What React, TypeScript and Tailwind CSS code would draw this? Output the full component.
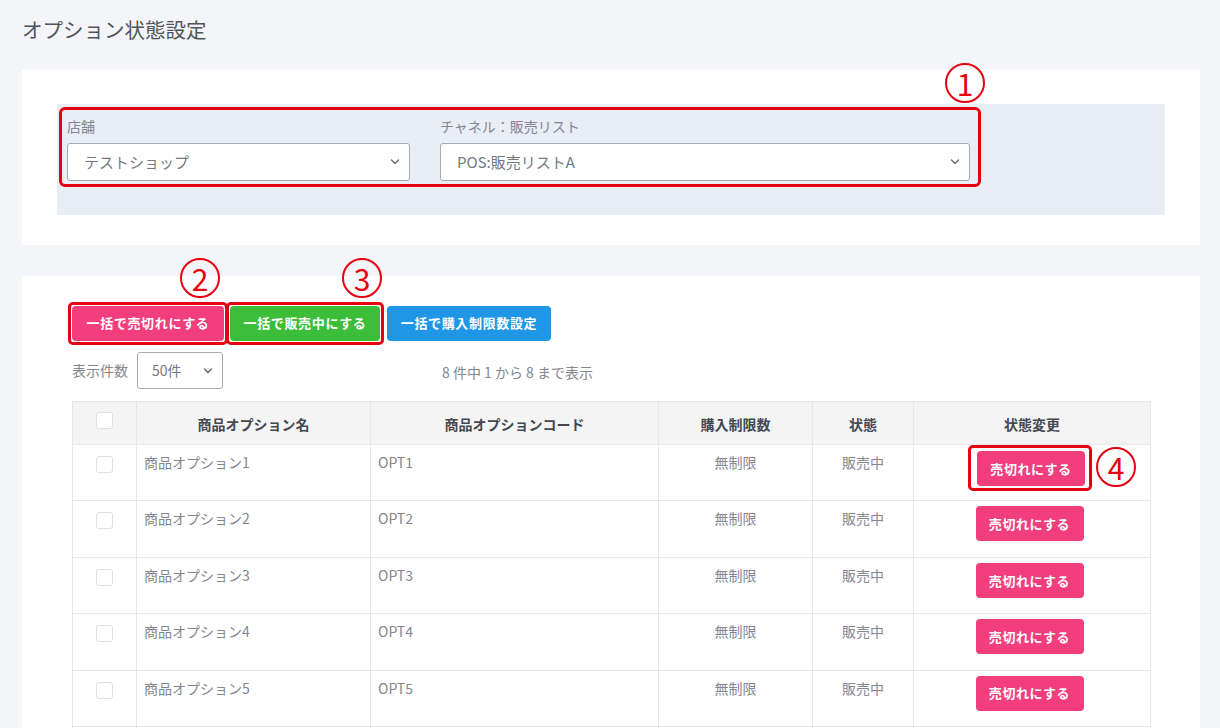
import type React from "react";

const rows = [1, 2, 3, 4, 5, 6, 7, 8];

const Circled: React.FC<{ n: string; className: string }> = ({ n, className }) => (
	<div
		className={`absolute w-[40px] h-[40px] rounded-full border-2 border-[#e60012] flex items-center justify-center text-[30px] leading-none text-[#e60012] bg-transparent ${className}`}
	>
		{n}
	</div>
);

const Chevron = () => (
	<svg
		className="absolute right-[10px] top-1/2 -translate-y-1/2 pointer-events-none"
		width="10"
		height="7"
		viewBox="0 0 10 7"
		fill="none"
	>
		<path d="M1.5 1.5 5 5 8.5 1.5" stroke="#6b6e75" strokeWidth="1.5" strokeLinecap="round" strokeLinejoin="round" />
	</svg>
);

const SelectBox: React.FC<{ value: string; className: string; textClass?: string }> = ({
	value,
	className,
	textClass = "pl-[16px] text-[15px]",
}) => (
	<div className={`relative ${className}`}>
		<select
			defaultValue={value}
			className={`w-full h-full appearance-none bg-white border border-[#a9abb0] rounded-[3px] text-[#757880] outline-none ${textClass}`}
		>
			<option>{value}</option>
		</select>
		<Chevron />
	</div>
);

const Checkbox = () => (
	<div className="w-[17px] h-[17px] border border-[#dcdfe4] rounded-[3px] bg-white" />
);

export default function App() {
	return (
		<div
			className="min-h-screen bg-[#f3f5f9] pl-[22px] pr-[20px] text-[#555]"
			style={{ fontFamily: '"Noto Sans CJK JP", "Noto Sans", sans-serif' }}
		>
			<h1 className="h-[70px] pt-[15px] text-[20.5px] leading-[28px] text-[#505458]">
				オプション状態設定
			</h1>

			{/* filter card */}
			<div className="relative bg-white pt-[34px] pb-[30px] px-[35px]">
				<Circled n="1" className="left-[923px] top-[-7px]" />
				<div className="bg-[#e9edf5] h-[111px] pt-[3px] pl-[2px]">
					<div className="w-[922px] h-[80px] border-[3px] border-[#e60012] rounded-[6px] pl-[5px] pr-[8px] flex gap-[30px]">
						<div className="w-[343px]">
							<div className="h-[33px] pt-[6px] text-[14px] leading-[20px] text-[#84878f]">店舗</div>
							<SelectBox value="テストショップ" className="h-[38px]" />
						</div>
						<div className="w-[530px]">
							<div className="h-[33px] pt-[6px] text-[14px] leading-[20px] text-[#84878f]">
								チャネル：販売リスト
							</div>
							<SelectBox value="POS:販売リストA" className="h-[38px]" />
						</div>
					</div>
				</div>
			</div>

			{/* list card */}
			<div className="relative bg-white mt-[31px] pt-[25px] pl-[50px] pr-[50px] pb-[10px]">
				<Circled n="2" className="left-[158px] top-[-18px]" />
				<Circled n="3" className="left-[320px] top-[-18px]" />

				<div className="flex items-center h-[44px]">
					<div className="-ml-[4px] border-[3px] border-[#e60012] rounded-[5px] p-[1px]">
						<button className="h-[35px] w-[152px] rounded-[4px] bg-[#f23e7d] text-white text-[13px] font-bold tracking-[0.05em]">
							一括で売切れにする
						</button>
					</div>
					<div className="-ml-[2px] border-[3px] border-[#e60012] rounded-[5px] p-[1px]">
						<button className="h-[35px] w-[150px] rounded-[4px] bg-[#3dbe3b] text-white text-[13px] font-bold tracking-[0.05em]">
							一括で販売中にする
						</button>
					</div>
					<button className="ml-[3px] h-[35px] w-[164px] rounded-[4px] bg-[#1f97e6] text-white text-[13px] font-bold tracking-[0.05em]">
						一括で購入制限数設定
					</button>
				</div>

				<div className="flex items-center mt-[7px] h-[37px]">
					<span className="text-[14px] text-[#84878f] w-[65px]">表示件数</span>
					<SelectBox value="50件" className="h-[37px] w-[86px]" textClass="pl-[14px] text-[14px]" />
					<span className="ml-[219px] mt-[4px] text-[14px] text-[#84878f]">8 件中 1 から 8 まで表示</span>
				</div>

				<table className="mt-[12px] w-[1078px] border-collapse table-fixed text-[14px]">
					<colgroup>
						<col className="w-[64px]" />
						<col className="w-[234px]" />
						<col className="w-[288px]" />
						<col className="w-[154px]" />
						<col className="w-[101px]" />
						<col className="w-[237px]" />
					</colgroup>
					<thead>
						<tr className="h-[43px] bg-[#f4f4f5] font-bold text-[#454850]">
							<th className="border border-[#e6e7ea]">
								<div className="flex justify-center -mt-[5px]">
									<Checkbox />
								</div>
							</th>
							<th className="border border-[#e6e7ea] pt-[3px]">商品オプション名</th>
							<th className="border border-[#e6e7ea] pt-[3px]">商品オプションコード</th>
							<th className="border border-[#e6e7ea] pt-[3px]">購入制限数</th>
							<th className="border border-[#e6e7ea] pt-[3px]">状態</th>
							<th className="border border-[#e6e7ea] pt-[3px]">状態変更</th>
						</tr>
					</thead>
					<tbody className="text-[#84878f]">
						{rows.map((n) => (
							<tr key={n} className="h-[56.4px]">
								<td className="border border-[#e6e7ea] align-top pt-[11px]">
									<div className="flex justify-center">
										<Checkbox />
									</div>
								</td>
								<td className="border border-[#e6e7ea] align-top pt-[7px] px-[7px] leading-[20px]">
									商品オプション{n}
								</td>
								<td className="border border-[#e6e7ea] align-top pt-[7px] px-[7px] leading-[20px]">
									OPT{n}
								</td>
								<td className="border border-[#e6e7ea] align-top pt-[7px] text-center leading-[20px]">
									無制限
								</td>
								<td className="border border-[#e6e7ea] align-top pt-[7px] text-center leading-[20px]">
									販売中
								</td>
								<td className="border border-[#e6e7ea] align-top text-center">
									{n === 1 ? (
										<div className="relative flex justify-center">
											<div className="ml-[-4px] border-[3px] border-[#e60012] rounded-[5px] pt-[3px] pb-[2px] pl-[6px] pr-[4px]">
												<button className="h-[35px] w-[108px] rounded-[4px] bg-[#f23e7d] text-white text-[13px] font-bold tracking-[0.04em]">
													売切れにする
												</button>
											</div>
											<Circled n="4" className="left-[182px] top-[2px]" />
										</div>
									) : (
										<div className="flex justify-center pt-[5px]">
											<button className="-ml-[5px] h-[35px] w-[108px] rounded-[4px] bg-[#f23e7d] text-white text-[13px] font-bold tracking-[0.04em]">
												売切れにする
											</button>
										</div>
									)}
								</td>
							</tr>
						))}
					</tbody>
				</table>
			</div>
		</div>
	);
}
